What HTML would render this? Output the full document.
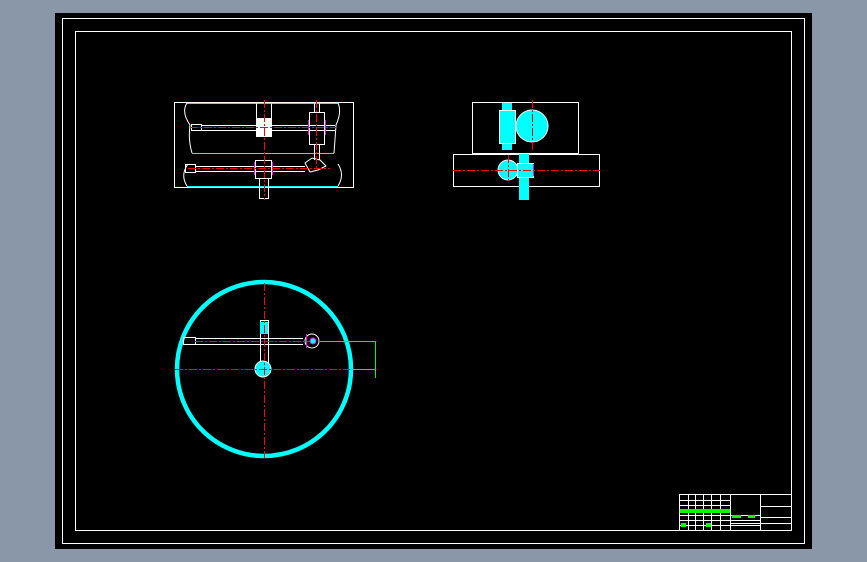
<!DOCTYPE html><html><head><style>html,body{margin:0;padding:0;background:#8a97a9;}svg{display:block}</style></head><body>
<svg width="867" height="562" viewBox="0 0 867 562" xmlns="http://www.w3.org/2000/svg" shape-rendering="crispEdges">
<rect x="0" y="0" width="867" height="562" fill="#8a97a9"/>
<rect x="55" y="13" width="757" height="536" fill="#000"/>
<rect x="62.5" y="18.5" width="742" height="525" fill="none" stroke="#fff"/>
<rect x="75.5" y="31.5" width="716" height="499" fill="none" stroke="#fff"/>
<g fill="none" stroke-width="1">
<rect x="174.5" y="102.5" width="179" height="85" stroke="#fff"/>
<line x1="187" y1="103.5" x2="338" y2="103.5" stroke="#0ff"/>
<line x1="187" y1="186.5" x2="338" y2="186.5" stroke="#0ff"/>
<line x1="192" y1="153.5" x2="334" y2="153.5" stroke="#0ff"/>
<path d="M187,103 Q181,112 190,125 Q188,140 192,153 M338,103 Q342,112 336,125 Q335,140 334,153 M188,164 Q180,175 187,186 M338,164 Q345,175 338,186" stroke="#fff" shape-rendering="auto"/>
<rect x="191.5" y="124.5" width="10" height="6" stroke="#fff"/>
<line x1="201" y1="125.5" x2="335" y2="125.5" stroke="#fff"/><line x1="201" y1="130.5" x2="335" y2="130.5" stroke="#fff"/>
<rect x="256.5" y="102.5" width="15" height="34" stroke="#fff"/>
<rect x="257" y="118" width="14" height="18" fill="#fff" stroke="none"/>
<rect x="309.5" y="112.5" width="15" height="32" stroke="#fff"/>
<line x1="308.5" y1="120" x2="308.5" y2="135" stroke="#f0f"/><line x1="325.5" y1="120" x2="325.5" y2="135" stroke="#f0f"/>
<line x1="314.5" y1="102" x2="314.5" y2="112" stroke="#fff"/><line x1="319.5" y1="102" x2="319.5" y2="112" stroke="#fff"/>
<line x1="314.5" y1="144" x2="314.5" y2="160" stroke="#fff"/><line x1="319.5" y1="144" x2="319.5" y2="160" stroke="#fff"/>
<rect x="185.5" y="164.5" width="10" height="8" stroke="#fff"/>
<line x1="195" y1="166.5" x2="305" y2="166.5" stroke="#fff"/><line x1="195" y1="171.5" x2="305" y2="171.5" stroke="#fff"/>
<rect x="255.5" y="160.5" width="16" height="18" stroke="#fff"/>
<line x1="254.5" y1="162" x2="254.5" y2="175" stroke="#f0f"/><line x1="272.5" y1="162" x2="272.5" y2="175" stroke="#f0f"/>
<rect x="259.5" y="178.5" width="9" height="20" stroke="#fff"/>
<path d="M305,163 L312,158 L320,160 L326,166 L318,170 L310,172 Z" stroke="#fff" shape-rendering="auto"/>
<g stroke="#f00" stroke-dasharray="8,2,2,2">
<line x1="190" y1="127.5" x2="336" y2="127.5"/><line x1="188" y1="168.5" x2="330" y2="168.5"/>
<line x1="264.5" y1="100" x2="264.5" y2="200"/><line x1="316.5" y1="100" x2="316.5" y2="168"/>
</g>
<rect x="472.5" y="102.5" width="106" height="51" stroke="#fff"/>
<rect x="453.5" y="154.5" width="146" height="32" stroke="#fff"/>
<rect x="502" y="103" width="10" height="47" fill="#0ff" stroke="none"/>
<rect x="499.5" y="110.5" width="16" height="33" fill="#0ff" stroke="#fff"/>
<circle cx="532" cy="126" r="16" fill="#0ff" stroke="#fff" shape-rendering="auto"/>
<circle cx="508" cy="170" r="10" fill="#0ff" stroke="#fff" shape-rendering="auto"/>
<rect x="519" y="154" width="10" height="46" fill="#0ff" stroke="none"/>
<rect x="517.5" y="163.5" width="16" height="14" fill="#0ff" stroke="#fff"/>
<line x1="533.5" y1="164" x2="533.5" y2="176" stroke="#f0f"/>
<g stroke="#f00" stroke-dasharray="8,2,2,2">
<line x1="453" y1="170.5" x2="600" y2="170.5"/><line x1="532.5" y1="100" x2="532.5" y2="150"/><line x1="508.5" y1="155" x2="508.5" y2="183"/>
</g>
<circle cx="264" cy="369" r="87" stroke="#0ff" stroke-width="4.5" shape-rendering="auto"/>
<rect x="183.5" y="337.5" width="12" height="7" stroke="#fff"/>
<line x1="195" y1="338.5" x2="303" y2="338.5" stroke="#fff"/><line x1="195" y1="344.5" x2="303" y2="344.5" stroke="#fff"/>
<rect x="260.5" y="320.5" width="8" height="42" stroke="#fff"/>
<rect x="260" y="322" width="8" height="12" fill="#0ff" stroke="none"/>
<circle cx="263" cy="369" r="8" fill="#0ff" stroke="#fff" shape-rendering="auto"/>
<circle cx="312" cy="341" r="7" stroke="#fff" shape-rendering="auto"/><circle cx="313" cy="341" r="3" fill="#0ff" stroke="#f0f" shape-rendering="auto"/>
<line x1="306.5" y1="334" x2="306.5" y2="348" stroke="#f0f"/>
<g stroke="#f00" stroke-dasharray="8,2,2,2">
<line x1="175" y1="369.5" x2="350" y2="369.5"/><line x1="264.5" y1="283" x2="264.5" y2="458"/><line x1="195" y1="341.5" x2="310" y2="341.5"/>
</g>
<path d="M320,341.5 H375.5 V369.5 H350 M375.5,362 V378" stroke="#0f0"/>
<rect x="679.5" y="494.5" width="112" height="36" stroke="#fff"/>
<line x1="730.5" y1="494" x2="730.5" y2="530" stroke="#fff"/>
<line x1="760.5" y1="494" x2="760.5" y2="530" stroke="#fff"/>
<line x1="760" y1="506.5" x2="792" y2="506.5" stroke="#fff"/>
<line x1="760" y1="517.5" x2="792" y2="517.5" stroke="#fff"/>
<line x1="730" y1="523.5" x2="792" y2="523.5" stroke="#fff"/>
<path d="M680,500.5H730M680,505.5H730M680,515.5H760M680,520.5H760M680,525.5H760M688.5,495V530M695.5,495V530M703.5,495V530M711.5,495V530M720.5,495V530" stroke="#fff"/>
</g>
<g fill="#0f0">
<rect x="680" y="509" width="50" height="4"/><rect x="732" y="515" width="9" height="3"/><rect x="748" y="515" width="7" height="3"/><rect x="681" y="523" width="5" height="4"/><rect x="706" y="523" width="5" height="4"/>
</g>
</svg>
</body></html>
